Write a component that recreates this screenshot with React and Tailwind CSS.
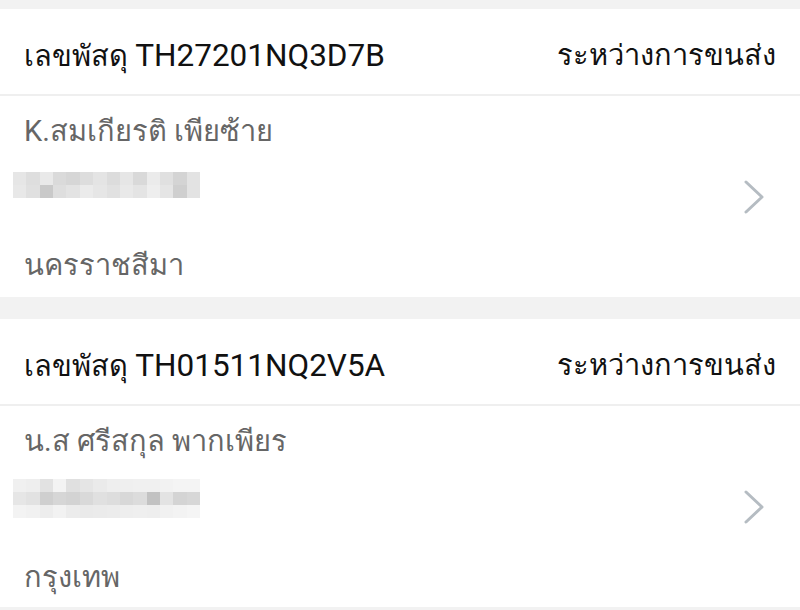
import React from 'react';

// Parcel list: two shipments in transit, each with a blurred address line
const parcels = [
  {
    code: 'TH27201NQ3D7B',
    status: 'ระหว่างการขนส่ง',
    name: 'K.สมเกียรติ เพียซ้าย',
    city: 'นครราชสีมา',
    blurTop: 21,
    cityTop: 47,
    blur: [
      ['#e6e6e6', '#dedede', '#e9e9e9', '#dadada', '#d6d6d6', '#dddddd', '#e4e4e4', '#dcdcdc', '#e6e6e6', '#d9d9d9', '#ebebeb', '#e0e0e0', '#d4d4d4', '#e3e3e3'],
      ['#e8e8e8', '#e0e0e0', '#c9c9c9', '#dedede', '#e3e3e3', '#ebebeb', '#e6e6e6', '#e1e1e1', '#e9e9e9', '#e4e4e4', '#eeeeee', '#e5e5e5', '#cfcfcf', '#e3e3e3'],
    ],
  },
  {
    code: 'TH01511NQ2V5A',
    status: 'ระหว่างการขนส่ง',
    name: 'น.ส ศรีสกุล พากเพียร',
    city: 'กรุงเทพ',
    blurTop: 18,
    cityTop: 39,
    blur: [
      ['#f0f0f0', '#eeeeee', '#e2e2e2', '#f3f3f3', '#e0e0e0', '#e5e5e5', '#eaeaea', '#eeeeee', '#efefef', '#f0f0f0', '#f0f0f0', '#f2f2f2', '#f4f4f4', '#f4f4f4'],
      ['#e6e6e6', '#e2e2e2', '#cfcfcf', '#d6d6d6', '#d3d3d3', '#d9d9d9', '#e0e0e0', '#dddddd', '#d8d8d8', '#dcdcdc', '#c2c2c2', '#e3e3e3', '#d4d4d4', '#d7d7d7'],
      ['#f3f3f3', '#f1f1f1', '#ededed', '#f2f2f2', '#ececec', '#eaeaea', '#ebebeb', '#ececec', '#eeeeee', '#efefef', '#eeeeee', '#f1f1f1', '#f3f3f3', '#f5f5f5'],
    ],
  },
];

function Chevron() {
  return (
    <svg width="22" height="36" viewBox="0 0 22 36" fill="none">
      <polyline
        points="3,3 19,18 3,33"
        stroke="#b5bcc2"
        strokeWidth="3"
        strokeLinecap="round"
        strokeLinejoin="round"
      />
    </svg>
  );
}

function BlurredLine({ rows }) {
  return (
    <div className="flex w-[187px] flex-col blur-[0.6px]">
      {rows.map((row, i) => (
        <div key={i} className="flex h-[13px]">
          {row.map((c, j) => (
            <div key={j} className="h-full flex-1" style={{ backgroundColor: c }} />
          ))}
        </div>
      ))}
    </div>
  );
}

function ParcelCard({ parcel }) {
  return (
    <div className="bg-white">
      <div className="flex h-[87px] items-center justify-between border-b-2 border-[#efefef] px-6 pt-2 text-[29px] text-[#111]">
        <span>
          เลขพัสดุ <span className="text-[31.5px]">{parcel.code}</span>
        </span>
        <span>{parcel.status}</span>
      </div>
      <div className="flex h-[201px] items-center justify-between pl-[24px] pr-[35px]">
        <div className="flex h-full flex-col pt-[15px]">
          <div className="text-[29px] leading-[40px] text-[#666]">{parcel.name}</div>
          <div className="-ml-[11px]" style={{ marginTop: parcel.blurTop }}>
            <BlurredLine rows={parcel.blur} />
          </div>
          <div
            className="text-[29px] leading-[40px] text-[#666]"
            style={{ marginTop: parcel.cityTop }}
          >
            {parcel.city}
          </div>
        </div>
        <Chevron />
      </div>
    </div>
  );
}

export default function App() {
  return (
    <div className="flex h-[610px] w-[800px] flex-col gap-[22px] overflow-hidden bg-[#f2f2f2] pt-[9px] font-['Roboto','Noto_Sans',sans-serif]">
      {parcels.map((p) => (
        <ParcelCard key={p.code} parcel={p} />
      ))}
    </div>
  );
}
